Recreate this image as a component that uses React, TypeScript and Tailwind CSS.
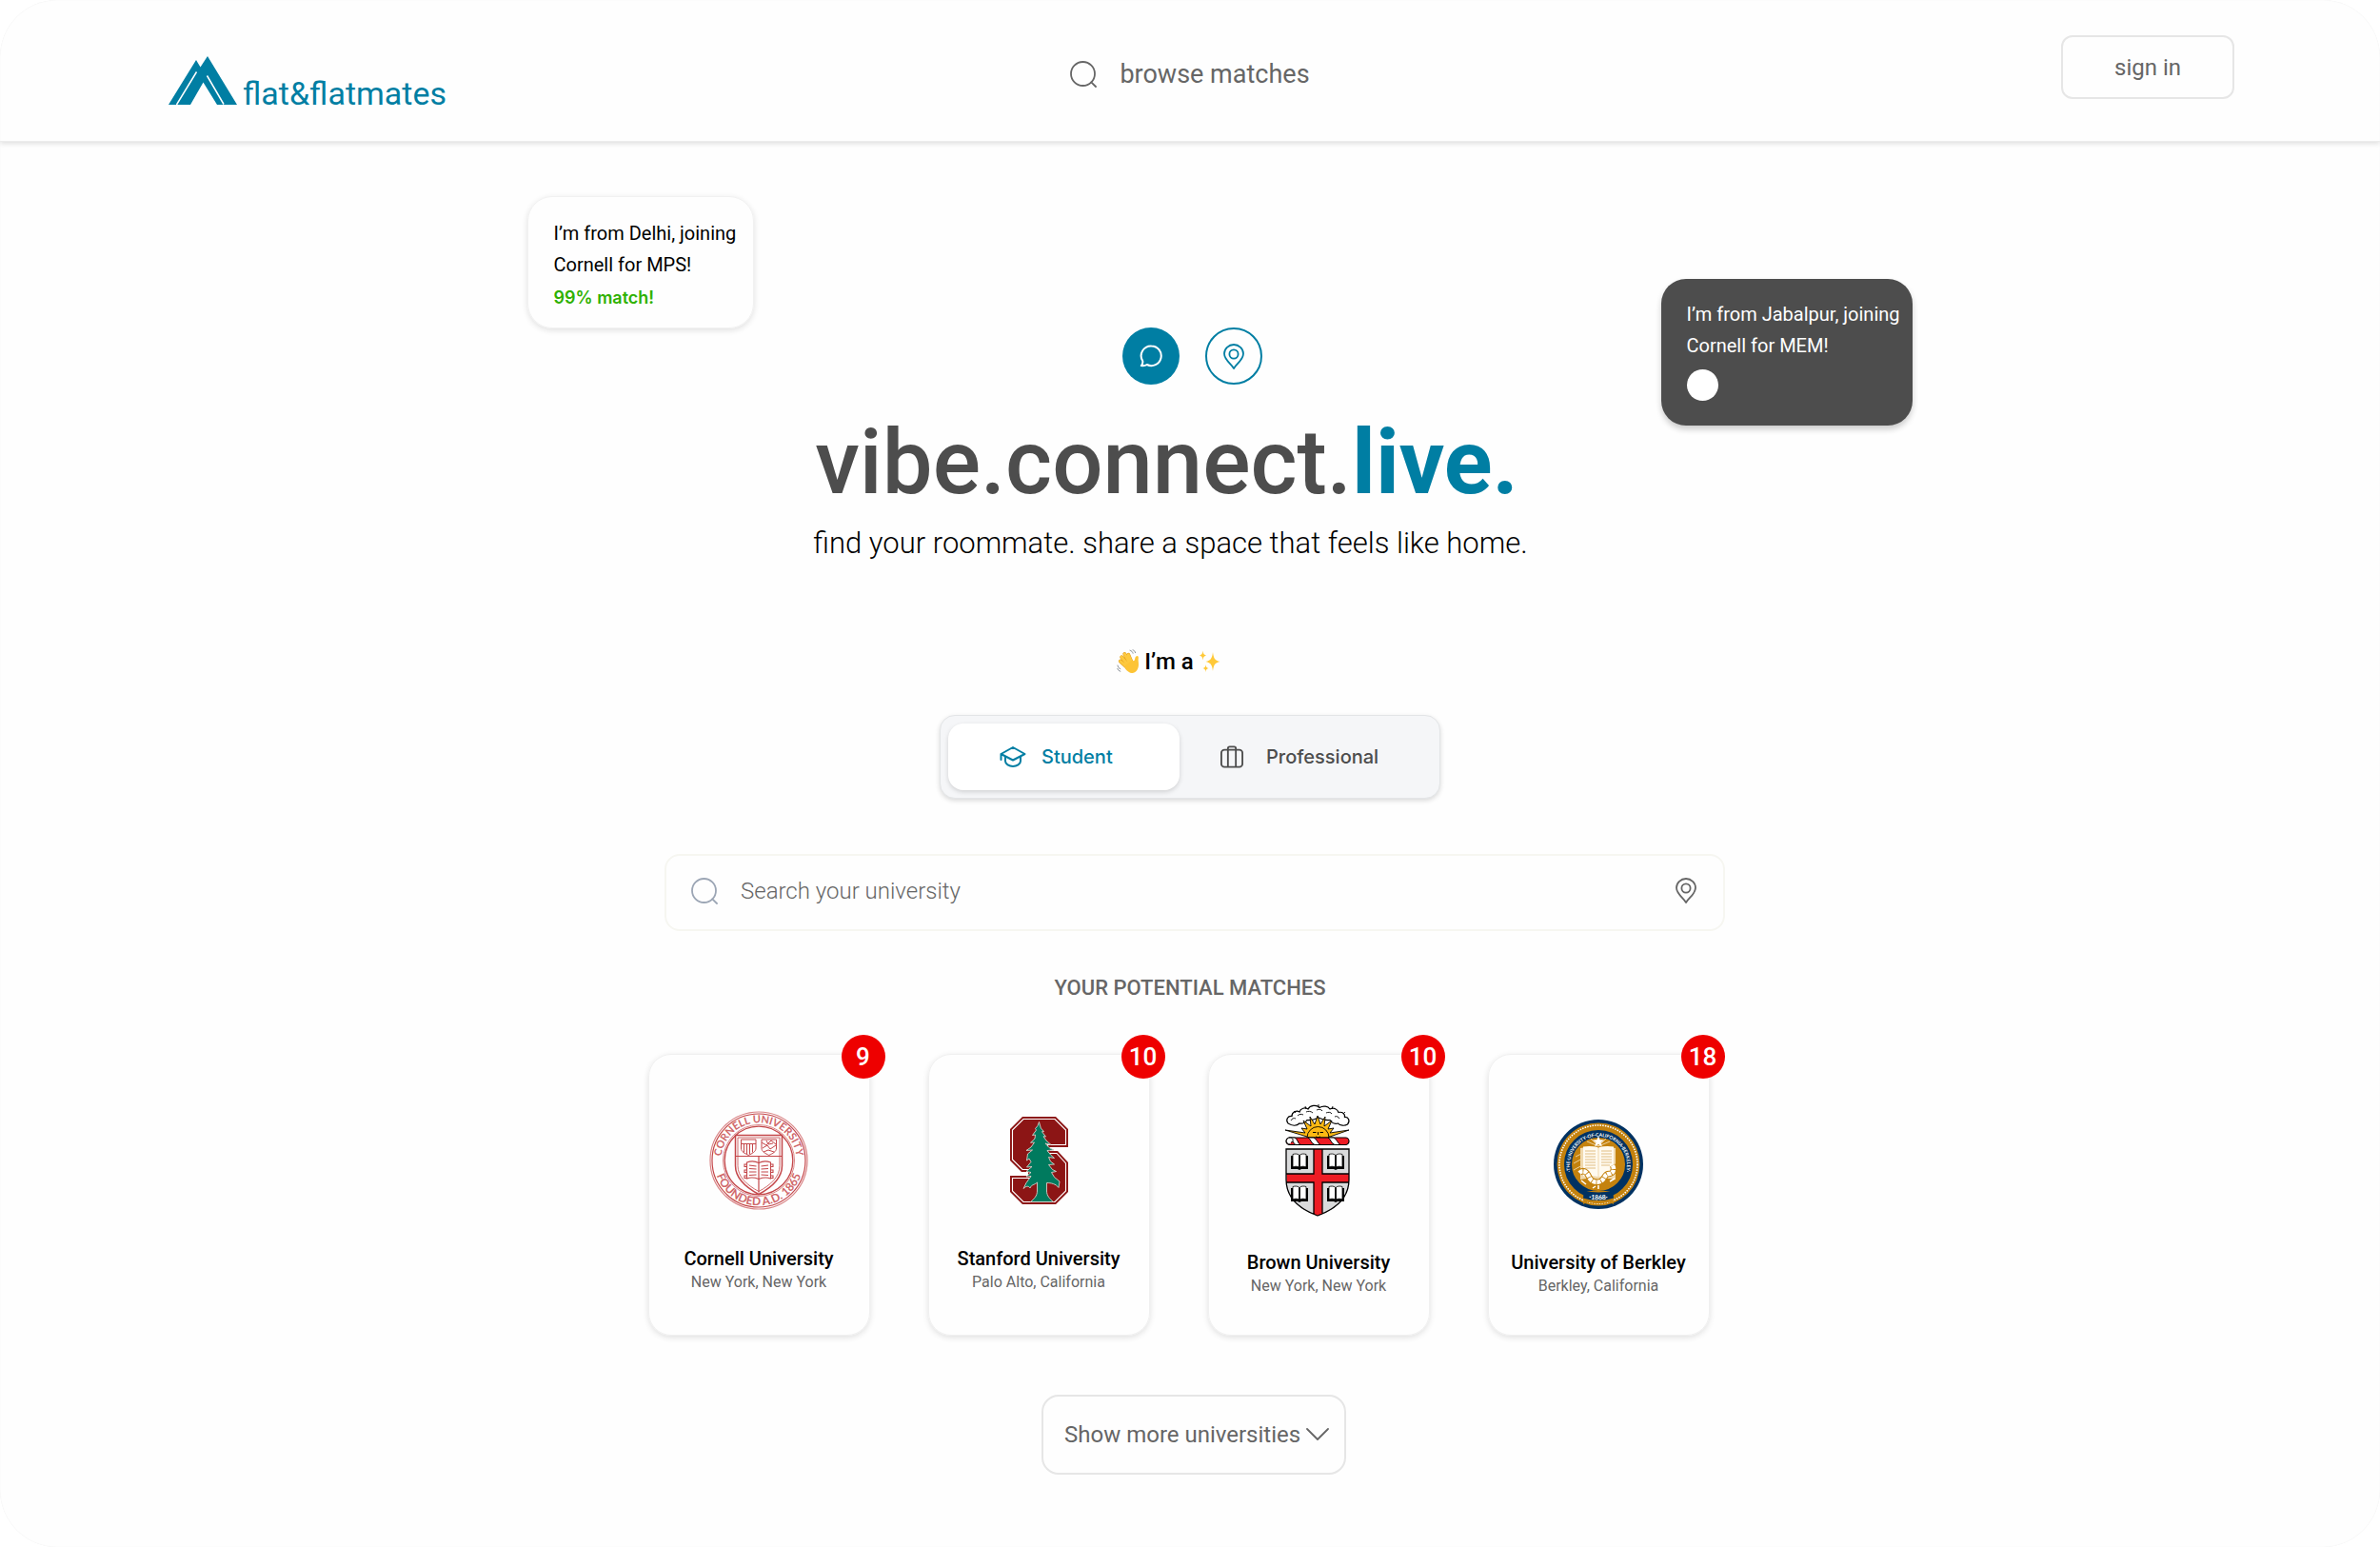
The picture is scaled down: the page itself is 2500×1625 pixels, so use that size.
import { ReactNode, useState } from "react";
import clsx from "clsx";

type IconProps = { className?: string };

const SearchIcon = ({ className }: IconProps) => (
  <svg viewBox="0 0 28 28" fill="none" stroke="currentColor" strokeWidth="1.8" strokeLinecap="round" className={className}>
    <circle cx="13.5" cy="13.5" r="12.5" />
    <path d="M22.3 22.3 27 27" />
  </svg>
);

const PinIcon = ({ className }: IconProps) => (
  <svg viewBox="0 0 22 27" fill="none" stroke="currentColor" strokeWidth="1.8" strokeLinejoin="round" className={className}>
    <path d="M11 26C8.5 21.5 1 17 1 10.6a10 9.6 0 0 1 20 0C21 17 13.5 21.5 11 26Z" />
    <circle cx="11" cy="11" r="4.6" />
  </svg>
);

const ChatIcon = ({ className }: IconProps) => (
  <svg viewBox="0 0 24 24" fill="none" stroke="currentColor" strokeWidth="2" strokeLinejoin="round" className={className}>
    <path d="M12.5 1.500a10.300 10.300 0 1 1-4.700 19.500c-1.500 1-3.600 1.400-6 1.100 1.300-1.600 1.800-3.100 1.500-4.800A10.300 10.300 0 0 1 12.500 1.500Z" />
  </svg>
);

const StudentIcon = ({ className }: IconProps) => (
  <svg viewBox="0 0 28 24" fill="none" stroke="currentColor" strokeWidth="2" strokeLinecap="round" strokeLinejoin="round" className={className}>
    <path d="M1.500 9 14 2l12.500 7L14 15.500 1.500 9v6" />
    <path d="M6 12v4.500c0 3 4 5.500 8 5.500s8-2.500 8-5.500V12" />
  </svg>
);

const LuggageIcon = ({ className }: IconProps) => (
  <svg viewBox="0 0 26 26" fill="none" stroke="currentColor" strokeWidth="2" strokeLinejoin="round" className={className}>
    <rect x="1" y="5" width="24" height="19.5" rx="3.5" />
    <path d="M8.500 24.500V3.500a2 2 0 0 1 2-2h5a2 2 0 0 1 2 2v21" />
  </svg>
);

const LogoMark = ({ className }: IconProps) => (
  <svg viewBox="0 0 72 51" className={className}>
    <path d="M0 51 29 4l4.500 7.500L41 0l31 51H51L36.500 27.500 23 51Z" fill="#007ea3" />
    <path d="M8.500 51 29.500 16.500M40.500 20.500 58 50.500" stroke="#fff" strokeWidth="1.500" fill="none" />
  </svg>
);

const WaveEmoji = () => (
  <svg viewBox="0 0 24 26" className="h-[26px] w-6" role="img" aria-label="waving hand" fill="none" strokeLinecap="round">
    <path d="M12 20 3.800 12.500M13 18 5.200 8.200M14.500 16 8.300 5M16.500 15.500 12.300 5.800" stroke="#e09a1a" strokeWidth="3.800" />
    <path d="M12 20 3.800 12.500M13 18 5.200 8.200M14.500 16 8.300 5M16.500 15.500 12.300 5.800" stroke="#fdc93f" strokeWidth="3" />
    <path d="M9 17 16 11.500c1.500 1 2.600.8 3-.5.300-2 .8-3.800 2.300-4 1.400-.1 1.700 1 1.500 2.200-.4 2.300.3 4.500.2 7.300-.2 4.800-3 8.200-6.600 8.500-2.700.2-4.600-1.500-7.400-4.500Z" fill="#fdc436" />
    <path d="M14 1.200c1.600.4 2.700 1.500 3.100 3M17 .8c1.500.5 2.300 1.400 2.600 2.800M1 17c.3 1.800 1.300 3 2.800 3.600M.8 20.300c.5 1.500 1.500 2.400 3 2.900" stroke="#8b9299" />
  </svg>
);

const SparklesEmoji = () => (
  <svg viewBox="0 0 24 26" className="h-[26px] w-6" role="img" aria-label="sparkles" fill="#ffc938">
    <path d="M15 3c.8 6.500 2 8.700 7.500 10-5.500 1.300-6.700 3.500-7.500 10-.8-6.500-2-8.700-7.500-10C13 11.700 14.200 9.500 15 3Z" />
    <path d="M4.500 1.500c.4 3.200 1 4.300 3.500 5-2.500.7-3.100 1.800-3.500 5-.4-3.200-1-4.300-3.500-5 2.500-.7 3.100-1.800 3.500-5ZM7.500 16c.3 2.700.8 3.500 3 4-2.200.5-2.700 1.300-3 4-.3-2.700-.8-3.500-3-4 2.200-.5 2.700-1.300 3-4Z" />
  </svg>
);

const CornellSeal = () => (
  <svg viewBox="0 0 104 104" className="size-[104px]" fill="none" stroke="#c4474a" role="img" aria-label="Cornell University seal">
    <circle cx="52" cy="52" r="51" strokeWidth="1.200" stroke="#d98587" />
    <circle cx="52" cy="52" r="49" strokeWidth="1.200" />
    <circle cx="52" cy="52" r="37.500" strokeWidth="1" stroke="#d98587" />
    <circle cx="52" cy="52" r="35.800" strokeWidth="1.300" />
    <path id="cornell-top" d="M12.500 56a39.700 39.700 0 1 1 79 0" stroke="none" />
    <path id="cornell-bottom" d="M4.800 52a47.200 47.200 0 0 0 94.400 0" stroke="none" />
    <g fill="#cf6669" stroke="none" fontFamily="Lato, sans-serif" fontSize="11" fontWeight="700" textAnchor="middle">
      <text>
        <textPath href="#cornell-top" startOffset="50%">CORNELL UNIVERSITY</textPath>
      </text>
      <text fontSize="12">
        <textPath href="#cornell-bottom" startOffset="50%">FOUNDED A.D. 1865</textPath>
      </text>
    </g>
    <path d="M27.500 25.500h49v32C76.500 71 66 80 52 87.500 38 80 27.500 71 27.500 57.500Z" strokeWidth="1.500" />
    <path d="M30 28h44v29.500C74 69 65 77.500 52 84.500 39 77.500 30 69 30 57.500Z" strokeWidth=".8" />
    <path d="M28 47.500h48M52 47.500v38" strokeWidth="1.200" />
    <path d="M33.500 30h15.500v9c0 4-4 5.500-7.700 7.500-3.800-2-7.800-3.500-7.800-7.500ZM33.500 34.500H49M36.500 34.500v9M39.500 34.500v11M42.500 34.500v11M45.500 34.500v9" strokeWidth="1" />
    <path d="M55 30h15.500v9c0 4-4 5.500-7.700 7.500-3.800-2-7.800-3.500-7.800-7.500ZM55 33l5 3 5-5 5 4M56 39l5-3 3 4 6-4M57 43l5-2 6 2M60 31l2 4 5-1" strokeWidth="1" />
    <path d="M39.500 54c4-1.500 8.500-1.500 12.500.5 4-2 8.500-2 12.500-.5v17c-4-1.500-8.500-1-12.500.5-4-1.500-8.500-2-12.500-.5ZM37 56h2.500v2.500H37Zm0 6h2.500v2.500H37Zm0 6h2.500v2.500H37ZM64.500 56H67v2.500h-2.500Zm0 6H67v2.500h-2.500Zm0 6H67v2.500h-2.500Z" strokeWidth="1.100" />
    <path d="m42 57 7.500 1M42 60.500l7.500.5M42 64h7.500M42 67.500l7.500-.5M62 57l-7.500 1M62 60.500l-7.500.5M62 64h-7.500M62 67.500l-7.500-.5" strokeWidth="1.100" />
  </svg>
);

const StanfordLogo = () => (
  <svg viewBox="0 0 61 92" className="h-[92px] w-[61px]" role="img" aria-label="Stanford University logo">
    <path d="M13 0h35l13 13v19H42v4h8l11 12v31L48 92H13L0 79V62h19v-4h-7L0 46V13Z" fill="#8c1515" />
    <path d="M14 2.500h33L58.500 14v15.500h-19v9h9.500l9.500 10.500v29L47 89.500H14L2.500 78V64.500h19v-9H13L2.500 45V14Z" fill="none" stroke="#fff" strokeWidth="1.100" />
    <path
      d="m30.500 5.500 1.800 6.500 3.200 3.500-2 .2 4 5.300-2.500-.3 3 4.300 5 4.500-6-1.500 4 4.500 5 2.500-7 .5 4 5 3.500 3-6-1 2 4.500 4 3-6 .5 4 5 4 2-5 1 3 5 5.500 4.500-1 6.500c-3-4-8-5-12.500-5v8.500c0 5 3 8 7 11.500H21.500c4-3.500 7-6.500 7-11.500v-9c-3 3-6 2-7.500 6-1.500-2.500-4-2.500-7 .5l3-6 5-7-5 .5 5-4.500-5-1 6-5-5.500.5 4.500-5.500-2-3.500-2.500 2 1-7 5-4-6.500.5 5-3.500 3.500-5-4 .2 4.500-4.200.5-4-3 .5 4-5.500-1-1.500 2.500-3Z"
      fill="#007a5e"
      stroke="#d9cfca"
      strokeWidth=".9"
    />
  </svg>
);

const BookGlyph = ({ x, y }: { x: number; y: number }) => (
  <g transform={`translate(${x} ${y})`}>
    <path d="M-9-6h18V8H2L0 9l-2-1h-7Z" fill="#000" />
    <path d="M-7-7.500c2.500-.8 5-.5 6.500.5V6C-2.500 5-4.500 5-7 5.800ZM7-7.500C4.500-8.300 2-8 .5-7V6C2.500 5 4.500 5 7 5.800Z" fill="#fff" stroke="#000" strokeWidth=".8" />
  </g>
);

const BrownCrest = () => (
  <svg viewBox="0 0 70 118" className="h-[118px] w-[70px]" role="img" aria-label="Brown University crest">
    <path
      d="M3 20c-3-4 0-8 4-7.500C7 8 12 6 15 8c1-4 6-5 9-3 2-4 9-5 12-1.500C40 1 45 2 47 5c4-2 8 0 9 3.500 4-1 7 1.500 6.500 5 4-.5 6 4 3 7.500-3 2-8 1.500-10-1-4 1-7-1-8.500-3.500-4 .5-8-.5-12-2.500-4 2-8 3-12 2.500-2 3-5 4-8 3.500-3 3-8 2.500-12 0Z"
      fill="#fff"
      stroke="#000"
      strokeWidth="1.200"
    />
    <path d="M6 17c1-2 3-3 5-2M13 12c2-2 4-2 6-1M22 8c2-1 5-1 7 1M33 6c2-1 5-1 6 1M43 9c2-1 5-1 6 1M52 13c2-1 4 0 5 2M35 3V0M22 5l-1-3M49 5l1-3M11 9 9 7M61 10l2-2" fill="none" stroke="#000" strokeWidth=".9" />
    <path d="m34 12 3 9 5-8-1 10 8-6-4 9 6-1-4 5 20-3-20 7H23L0 27l21 3-4-5 6 1-4-9 8 6-1-10 5 8Z" fill="#fdb913" stroke="#000" strokeWidth=".9" strokeLinejoin="round" />
    <path d="M23 35a11.500 11.500 0 0 1 23 0Z" fill="#fdb913" stroke="#000" strokeWidth=".9" />
    <path d="M29 29.500h3.500M36.500 29.500H40M32 34q2.500 1.500 5 0M34.500 29v3" stroke="#000" fill="none" />
    <rect x="1" y="35" width="66" height="7.500" rx="3.700" fill="#ed1c24" stroke="#000" strokeWidth="1.200" />
    <g fill="#fff" stroke="#000" strokeWidth="1">
      <path d="M4 35h6c3 1 3 6 6 7.500h-5C8 41 8 37 4 35ZM24 35h6c3 1 4 6 7 7.500h-6c-4-1.500-4-6-7-7.500ZM45 35h6c3 1 4 6 7 7.500h-6c-4-1.500-4-6-7-7.500Z" />
      <path d="M5 42c-5 0-5-7 0-7 4 0 4 5 1 5" />
    </g>
    <path d="M1 47h66v32c0 20-14 31-33 38C15 110 1 99 1 79Z" fill="#d9dadb" />
    <path d="M30 47h9v68.500l-5 1.500-4-1.500ZM1.500 73H67v9H1.500Z" fill="#ed1c24" />
    <path d="M30 47v26H1M39 47v26h28M30 115V82H1.500M39 115V82h27.500M1 47h66v32c0 20-14 31-33 38C15 110 1 99 1 79Z" fill="none" stroke="#000" strokeWidth="1.300" />
    <BookGlyph x={15} y={60} />
    <BookGlyph x={53} y={60} />
    <BookGlyph x={15} y={94} />
    <BookGlyph x={53} y={94} />
  </svg>
);

const BerkeleySeal = () => (
  <svg viewBox="0 0 96 96" className="size-24" role="img" aria-label="University of California, Berkeley seal">
    <circle cx="48" cy="48" r="47" fill="#003262" />
    <circle cx="48" cy="48" r="43.500" fill="#c4820e" />
    <circle cx="48" cy="48" r="41" fill="none" stroke="#fff" strokeWidth="1.600" strokeDasharray="1.500 1.200" />
    <circle cx="48" cy="48" r="32" fill="none" stroke="#003262" strokeWidth="8" />
    <path d="M34 76h28l2 14-5-2.500c-7 2-15 2-22 0L32 90Z" fill="#c4820e" />
    <path id="berkeley-ring" d="M28.500 71.500A30 30 0 1 1 67.500 71.500" fill="none" />
    <path id="berkeley-year" d="M34 83.500q14 3.500 28 0" fill="none" />
    <path d="M33 75.500q15 4 30 0l1 8q-16 5-32 0Z" fill="#003262" />
    <g fill="#fff" fontFamily="Lato, sans-serif" fontSize="5" fontWeight="700" textAnchor="middle">
      <text>
        <textPath href="#berkeley-ring" startOffset="50%">·THE·UNIVERSITY·OF·CALIFORNIA·BERKELEY·</textPath>
      </text>
      <text fontSize="7">
        <textPath href="#berkeley-year" startOffset="50%">·1868·</textPath>
      </text>
    </g>
    <path d="M24 40l8-4M22 47l9-5M22 54l9-5M48 29 36 24M48 29l-8-8M48 29l12-5M48 29l8-8" stroke="#f0d9ae" strokeWidth=".9" />
    <path d="m48 18 1.600 4.200 4.400.2-3.400 2.800 1.200 4.300L48 27l-3.800 2.500 1.200-4.300-3.400-2.800 4.400-.2Z" fill="#fff" />
    <path d="M29 31q10-2 19 0 9-2 18 0v33q-9-2-18 0-9-2-19 0Z" fill="#f0d9ae" />
    <path d="M32 29.500q8-1 15.500.5v31q-8-1.500-15.500-.5ZM64 29.500q-8-1-15.500.5v31q8-1.500 15.500-.5Z" fill="#fffaf0" />
    <path d="M34 34h11M34 37h11M34 40h11M34 43h11M34 46h11M34 49h11M34 52h11M51 34h11M51 37h11M51 40h11M51 43h11M51 46h11M51 49h9" stroke="#dcb877" strokeWidth=".9" />
    <path d="M28 57c4-4 8-1 10 4s7 7 12 5 4-8 9-8 6-5 4-9" fill="none" stroke="#c4820e" strokeWidth="6.500" />
    <path d="M28 57c4-4 8-1 10 4s7 7 12 5 4-8 9-8 6-5 4-9" fill="none" stroke="#fff" strokeWidth="4.500" strokeDasharray="4 .8" />
    <path d="m30 65 5 4M42 73l3-2M60 66l5-3M48 70v4" stroke="#fff" strokeWidth="1.500" />
  </svg>
);

interface University {
  name: string;
  place: string;
  matches: number;
  logo: ReactNode;
  logoClass: string;
}

const universities: University[] = [
  { name: "Cornell University", place: "New York, New York", matches: 9, logo: <CornellSeal />, logoClass: "h-[202px] pt-5" },
  { name: "Stanford University", place: "Palo Alto, California", matches: 10, logo: <StanfordLogo />, logoClass: "h-[202px] pt-5" },
  { name: "Brown University", place: "New York, New York", matches: 10, logo: <BrownCrest />, logoClass: "h-[206px] pt-4" },
  { name: "University of Berkley", place: "Berkley, California", matches: 18, logo: <BerkeleySeal />, logoClass: "h-[206px] pt-6" },
];

const Header = () => (
  <header className="grid h-[149px] grid-cols-[1fr_auto_1fr] items-start border-b border-[#ececec] shadow-[0_2px_5px_rgba(0,0,0,0.12)]">
    <a href="#" className="flex items-end gap-[6px] pt-[59px] pl-[177px] text-[34px] leading-6 text-[#007ea3]">
      <LogoMark className="h-[51px] w-[72px]" />
      <span>flat&amp;flatmates</span>
    </a>
    <a href="#" className="flex items-center gap-6 pt-[60px] text-[27px] leading-9 text-[#666]">
      <SearchIcon className="size-7" />
      browse matches
    </a>
    <div className="flex justify-end pt-[37px] pr-[153px]">
      <button className="h-[67px] w-[182px] rounded-xl border-2 border-[#e6e6e6] text-[24px] text-[#666]">
        sign in
      </button>
    </div>
  </header>
);

const Hero = () => (
  <section className="flex items-start justify-center pt-[57px] pl-[62px]">
    <div className="mr-[60px] h-[139px] w-[238px] rounded-[26px] border border-[#f1f1f1] pt-[22px] pl-[27px] text-[20px] leading-[33px] whitespace-nowrap text-black shadow-[0_2px_6px_rgba(0,0,0,0.12)]">
      <p>I’m from Delhi, joining</p>
      <p>Cornell for MPS!</p>
      <p className="font-['Inter',sans-serif] text-[18px] leading-9 font-semibold text-[#2eb100]">99% match!</p>
    </div>
    <div className="flex w-[756px] flex-col items-center pt-[138px] whitespace-nowrap">
      <div className="flex gap-[27px] pl-[46px]">
        <button aria-label="Chat" className="flex size-[60px] items-center justify-center rounded-full bg-[#007ea3] text-white">
          <ChatIcon className="size-6" />
        </button>
        <button aria-label="Location" className="flex size-[60px] items-center justify-center rounded-full border-2 border-[#007ea3] text-[#007ea3]">
          <PinIcon className="h-[27px] w-[22px]" />
        </button>
      </div>
      <h1 className="mt-[26px] pr-2 text-[94px] leading-[112px] font-medium text-[#4d4d4d]">
        vibe.connect.<span className="font-bold text-[#007ea3]">live.</span>
      </h1>
      <p className="mt-[9px] text-[31px] leading-10 font-light text-black">
        find your roommate. share a space that feels like home.
      </p>
    </div>
    <div className="mt-[87px] ml-[137px] h-[154px] w-[264px] rounded-[26px] bg-[#4d4d4d] pt-[21px] pl-[27px] text-[20px] leading-[33px] whitespace-nowrap text-white shadow-[0_4px_6px_rgba(0,0,0,0.2)]">
      <p>I’m from Jabalpur, joining</p>
      <p>Cornell for MEM!</p>
      <div className="mt-2 size-[33px] rounded-full bg-white" />
    </div>
  </section>
);

const RoleSwitch = () => {
  const [role, setRole] = useState("student");

  const tabClass = (value: string) =>
    clsx(
      "flex h-[70px] items-center rounded-2xl font-['Inter',sans-serif] text-[20px] font-medium",
      role === value ? "bg-white text-[#007ea3] shadow-[0_2px_5px_rgba(0,0,0,0.15)]" : "text-[#4d4d4d]"
    );

  return (
    <div className="mt-10 flex h-[88px] w-[526px] items-center rounded-2xl border border-[#e3e5e7] bg-[#f5f6f8] px-2 shadow-[0_2px_5px_rgba(0,0,0,0.15)]">
      <button aria-pressed={role === "student"} onClick={() => setRole("student")} className={clsx(tabClass("student"), "w-[243px] gap-4 pl-[54px]")}>
        <StudentIcon className="h-6 w-7" />
        Student
      </button>
      <button aria-pressed={role === "professional"} onClick={() => setRole("professional")} className={clsx(tabClass("professional"), "flex-1 gap-6 pl-[43px]")}>
        <LuggageIcon className="size-6" />
        Professional
      </button>
    </div>
  );
};

const UniversityCard = ({ name, place, matches, logo, logoClass }: University) => (
  <li className="relative h-[296px] w-[233px] rounded-3xl border border-[#f0f0f0] text-center shadow-[0_2px_6px_rgba(0,0,0,0.12)]">
    <span className="absolute -top-[21px] -right-[17px] flex size-[46px] items-center justify-center rounded-full bg-[#ee0000] text-[26px] leading-none font-medium text-white">
      {matches}
    </span>
    <div className={clsx("flex items-center justify-center", logoClass)}>{logo}</div>
    <h3 className="text-[20px] leading-6 font-medium text-black">{name}</h3>
    <p className="mt-[3px] text-[16px] leading-5 text-[#666]">{place}</p>
  </li>
);

export default function App() {
  return (
    <div className="min-h-screen rounded-[60px] bg-[#fefefe] font-['Roboto',sans-serif] shadow-[inset_0_0_1px_rgba(0,0,0,0.1)]">
      <Header />
      <main className="flex flex-col pb-[76px]">
        <Hero />
        <section className="flex flex-col items-center">
          <p className="mt-[88px] flex items-center gap-[5px] pr-11 text-[24px] leading-8 font-medium text-black">
            <WaveEmoji />
            I’m a
            <SparklesEmoji />
          </p>
          <RoleSwitch />
          <div className="pl-[10px]">
            <label className="mt-[58px] flex h-[81px] w-[1114px] items-center gap-6 rounded-2xl border-2 border-[#f6f6f1] pr-7 pb-1 pl-[26px]">
              <SearchIcon className="size-7 shrink-0 text-[#9ca6b5]" />
              <input
                type="text"
                aria-label="Search your university"
                placeholder="Search your university"
                className="min-w-0 flex-1 text-[24px] font-light text-[#666] outline-none placeholder:text-[#666]"
              />
              <PinIcon className="h-[27px] w-[22px] shrink-0 text-[#666]" />
            </label>
          </div>
          <h2 className="mt-[46px] text-[22px] leading-7 font-medium text-[#666]">YOUR POTENTIAL MATCHES</h2>
          <ul className="mt-[55px] flex gap-[61px] pr-6">
            {universities.map((item) => (
              <UniversityCard key={item.name} {...item} />
            ))}
          </ul>
          <div className="pl-2">
            <button className="mt-[62px] flex h-[84px] w-80 items-center gap-[6px] rounded-[18px] border-2 border-[#e6e6e6] pl-[22px] text-[24px] whitespace-nowrap text-[#666]">
              Show more universities
              <svg viewBox="0 0 24 14" className="h-[14px] w-6" fill="none" stroke="currentColor" strokeWidth="1.800" strokeLinecap="round" strokeLinejoin="round">
                <path d="m1 1 11 11L23 1" />
              </svg>
            </button>
          </div>
        </section>
      </main>
    </div>
  );
}
